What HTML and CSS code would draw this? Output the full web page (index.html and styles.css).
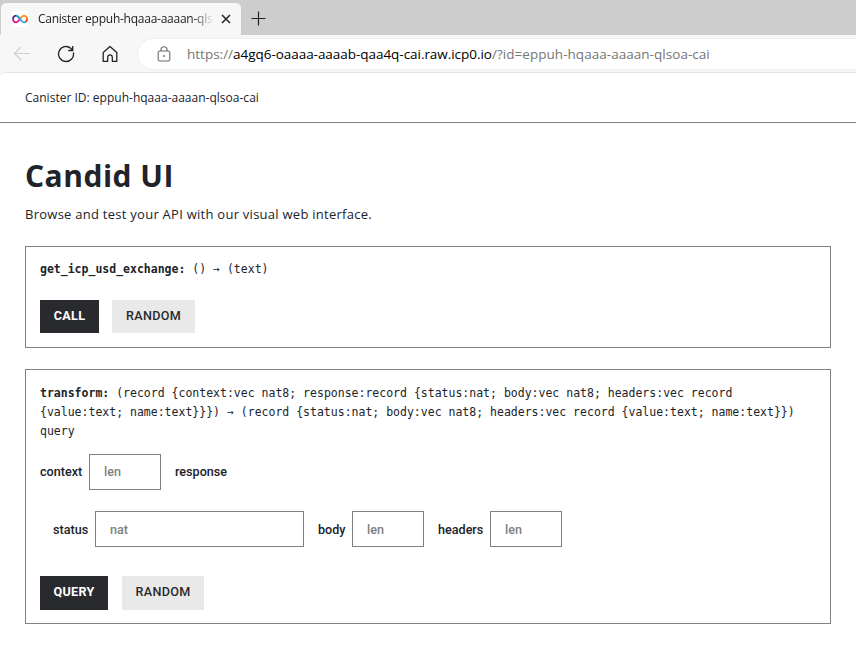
FILE: index.html
```html
<!DOCTYPE html>
<html lang="en">
<head>
<meta charset="utf-8">
<title>Candid UI</title>
<link rel="stylesheet" href="styles.css">
</head>
<body>
<div class="browser">
  <div class="tabs">
    <div class="tab">
      <svg class="favicon" width="16" height="16" viewBox="0 0 16 16" fill="none" stroke-width="1.8">
        <rect width="16" height="16" fill="#fff"/>
        <path d="M8 8C6.6 6.1 5.5 4.700 4 4.700A3.200 3.200 0 0 0 1.1 8" stroke="#5b2d90"/>
        <path d="M1.1 8A3 3 0 0 0 4 11.300C5.5 11.300 6.6 9.9 8 8" stroke="#d9138a"/>
        <path d="M8 8C9.4 6.1 10.5 4.700 12 4.700A3.200 3.200 0 0 1 14.9 8" stroke="#f7931e"/>
        <path d="M14.9 8A3 3 0 0 1 12 11.300C10.5 11.300 9.4 9.9 8 8C6.6 6.1 5.5 4.700 4 4.700" stroke="#29abe2"/>
        <path d="M14.9 7.6A3 3 0 0 1 13.4 10.8" stroke="#f15a24"/>
      </svg>
      <span class="tab-title">Canister eppuh-hqaaa-aaaan-qlsoa-cai</span>
      <svg class="close" width="10" height="10" viewBox="0 0 10 10" stroke="#222" stroke-width="1.5"><path d="M1 1l8 8M9 1l-8 8"/></svg>
    </div>
    <svg class="plus" width="15" height="15" viewBox="0 0 15 15" stroke="#222" stroke-width="1.2"><path d="M7.5 .5v14M.5 7.5h14"/></svg>
  </div>
  <div class="toolbar">
    <svg width="18" height="18" viewBox="0 0 18 18" fill="none" stroke="#cdcdcd" stroke-width="1.2"><path d="M17 8.5H1.5M8 2L1.5 8.5L8 15"/></svg>
    <svg width="18" height="18" viewBox="0 0 18 18" fill="none" stroke="#222" stroke-width="1.3"><path d="M16.400 7.5A7.500 7.500 0 1 1 13.800 3.200L15.500 5M15.700 1v4.500H11.200"/></svg>
    <svg width="18" height="18" viewBox="0 0 18 18" fill="none" stroke="#222" stroke-width="1.3" stroke-linejoin="round"><path d="M2.2 7.500L9 1.5L15.800 7.500V16.300H11.300V12.200A2.300 2.300 0 0 0 6.700 12.200V16.300H2.200Z"/></svg>
    <div class="address">
      <svg width="14" height="16" viewBox="0 0 14 16" fill="none" stroke="#6b6b6b" stroke-width="1.1"><rect x="1.200" y="5" width="11.600" height="10" rx="1.500"/><path d="M4 5V3.700a3 3 0 0 1 6 0V5"/><circle cx="7" cy="10" r=".9" fill="#6b6b6b" stroke="none"/></svg>
      <span class="url"><span class="scheme">https://</span><span class="host">a4gq6-oaaaa-aaaab-qaa4q-cai.raw.icp0.io</span><span class="path">/?id=eppuh-hqaaa-aaaan-qlsoa-cai</span></span>
    </div>
  </div>
</div>
<div class="page">
  <header><span>Canister ID: eppuh-hqaaa-aaaan-qlsoa-cai</span></header>
  <main>
    <h1>Candid UI</h1>
    <p class="intro">Browse and test your API with our visual web interface.</p>
    <section class="method">
      <div class="signature"><b>get_icp_usd_exchange:</b> () → (text)</div>
      <div class="buttons">
        <button class="primary">CALL</button>
        <button class="random">RANDOM</button>
      </div>
    </section>
    <section class="method transform">
      <div class="signature"><b>transform:</b> (record {context:vec nat8; response:record {status:nat; body:vec nat8; headers:vec record<br>{value:text; name:text}}}) → (record {status:nat; body:vec nat8; headers:vec record {value:text; name:text}})<br>query</div>
      <div class="fields">
        <label class="context">context</label><input placeholder="len">
        <label class="response">response</label>
      </div>
      <div class="fields nested">
        <label class="status">status</label><input class="wide" placeholder="nat">
        <label class="data">body</label><input placeholder="len">
        <label class="heads">headers</label><input placeholder="len">
      </div>
      <div class="buttons">
        <button class="primary query">QUERY</button>
        <button class="random">RANDOM</button>
      </div>
    </section>
  </main>
</div>
</body>
</html>
```
FILE: styles.css
```css
* { box-sizing: border-box; }
body { margin: 0; background: #f7f7f7; color: #20232a; font-family: "Open Sans", sans-serif; }
svg { flex: none; display: block; }
.browser { height: 72px; }
.tabs { height: 35px; background: #cdcdcd; display: flex; align-items: flex-start; padding: 3px 0 0 1px; }
.tab { width: 240px; height: 32px; background: #f7f7f7; border-radius: 5px 5px 0 0; display: flex; align-items: center; padding: 0 10px 0 11px; }
.tab-title { width: 175px; margin-left: 10px; white-space: nowrap; overflow: hidden; font-size: 12px; letter-spacing: -0.25px; line-height: 18px; color: #222; mask-image: linear-gradient(to right, #000 155px, transparent 176px); }
.close { margin-left: 8px; }
.plus { margin: 8px 0 0 10px; }
.toolbar { height: 37px; display: flex; align-items: center; gap: 26px; padding: 1px 0 0 13px; }
.address { flex: 1; height: 30px; margin-left: -7px; background: #fff; border-radius: 15px 0 0 15px; display: flex; align-items: center; gap: 16px; padding-left: 19px; box-shadow: 0 0 2px #ddd; }
.url { font-size: 13.5px; white-space: nowrap; line-height: 20px; color: #767676; }
.host { color: #000; letter-spacing: -0.04px; }
.path { letter-spacing: 0.04px; }
.page { height: 594px; background: #fff; border-top: 1px solid #e5e5e5; border-radius: 6px 0 0 0; }
header { height: 50px; border-bottom: 1px solid #808080; padding: 15px 25px 0; font-size: 12px; line-height: 20px; letter-spacing: 0.01px; }
main { padding: 33px 25px 0; }
h1 { margin: 0; font-size: 30px; line-height: 39px; height: 41px; letter-spacing: 0.5px; }
.intro { margin: 7px 0 0; height: 42px; font-size: 13px; line-height: 20px; letter-spacing: 0.26px; }
.method { border: 1px solid #808080; height: 102px; padding: 13px 14px 0; font-family: Roboto, sans-serif; }
.transform { height: 255px; margin-top: 21px; padding-top: 14px; }
.signature { font: 11.5px/19px "DejaVu Sans Mono", monospace; white-space: nowrap; }
.buttons { display: flex; gap: 13px; margin-top: 21px; }
.transform .buttons { margin-top: 29px; gap: 14px; }
button { border: 0; border-radius: 0; height: 33px; padding: 0 0 2px; font: 500 12.6px Roboto, sans-serif; letter-spacing: 0.3px; }
.transform button { height: 34px; padding-bottom: 4px; }
.primary { width: 59px; background: #292a2e; color: #fff; font-weight: 700; }
.query { width: 68px; }
.random { width: 83px; background: #e9e9e9; color: #292a2e; }
.transform .random { width: 82px; }
.fields { display: flex; align-items: center; height: 36px; margin-top: 13px; font-size: 12.6px; font-weight: 500; white-space: nowrap; }
.nested { margin-top: 21px; padding-left: 13px; }
input { width: 72px; height: 36px; border: 1px solid #808080; border-radius: 0; padding: 0 14px; font: 500 12.6px Roboto, sans-serif; background: #fff; }
input::placeholder { color: #808080; opacity: 1; }
.wide { width: 209px; }
.context { width: 49px; padding-bottom: 2px; }
.response { margin-left: 14px; padding-bottom: 2px; }
.fields:not(.nested) input { padding-bottom: 2px; }
.status { width: 42px; }
.data { margin-left: 14px; width: 34px; }
.heads { margin-left: 14px; width: 52px; }
```
